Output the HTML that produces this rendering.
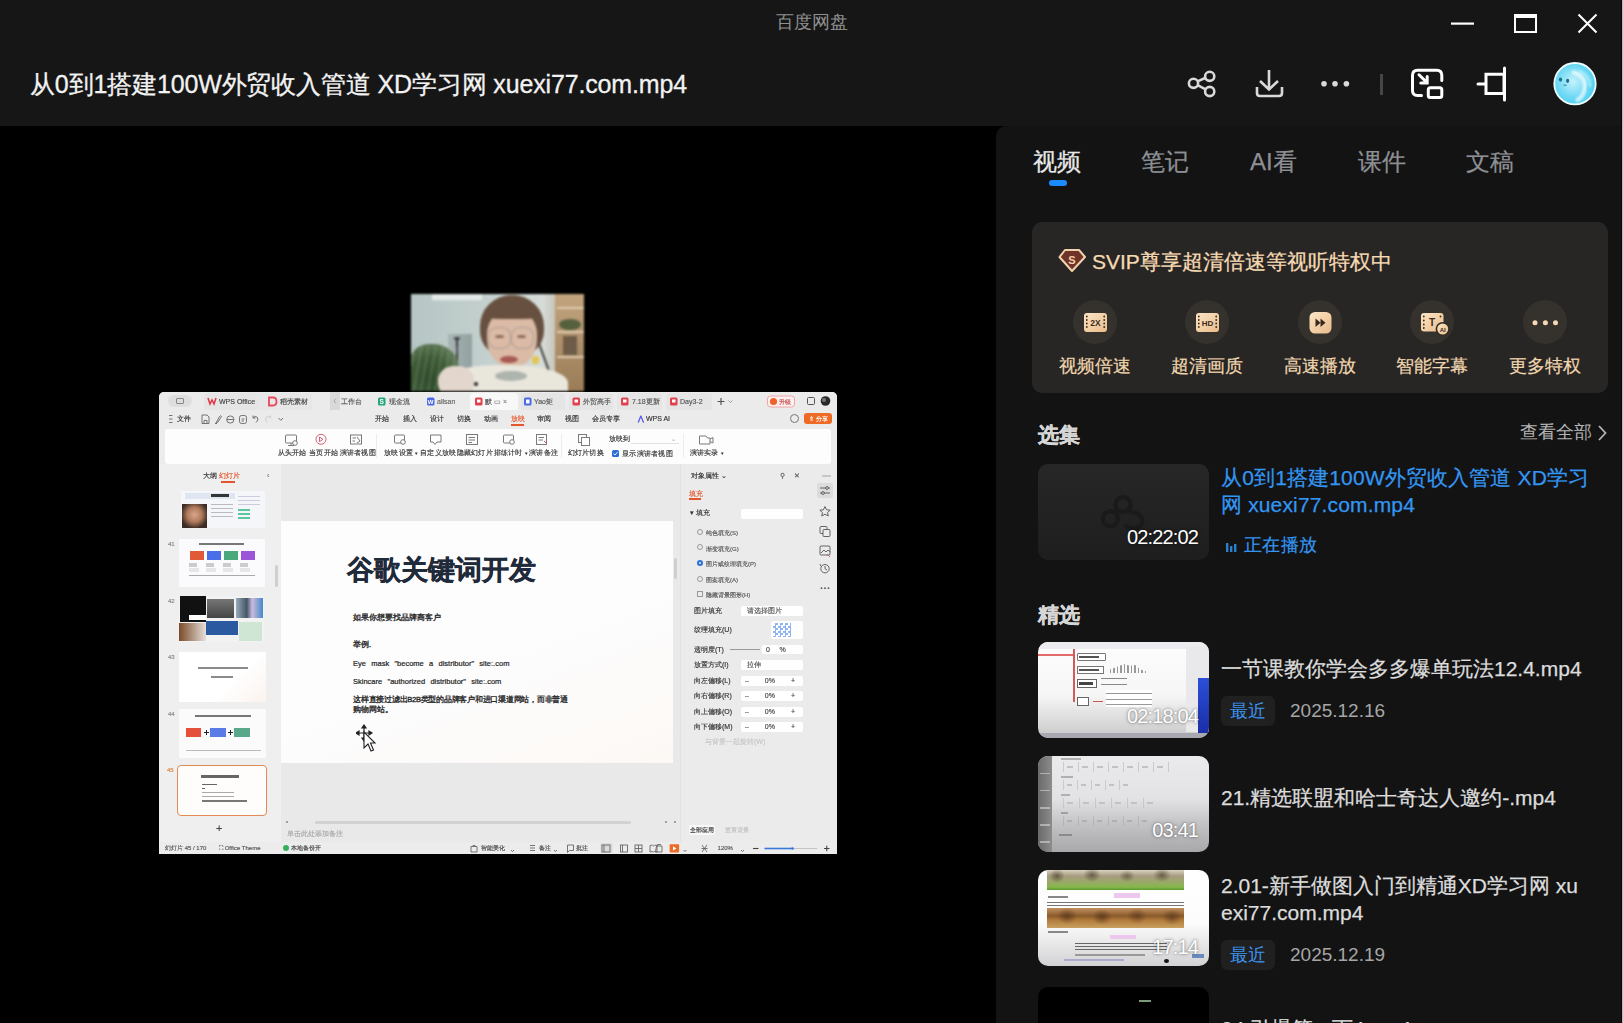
<!DOCTYPE html>
<html><head><meta charset="utf-8">
<style>
*{box-sizing:border-box;margin:0;padding:0}
html,body{width:1623px;height:1023px;overflow:hidden;background:#000;font-family:"Liberation Sans",sans-serif}
.a{position:absolute}
.nw{white-space:nowrap}
.rl{top:57px;font-size:6px;letter-spacing:0.3px}
.t{position:absolute;font-style:normal;font-size:7px;line-height:8px;color:#333;white-space:nowrap;-webkit-text-stroke:0.15px currentColor}
#tb{left:0;top:0;width:1623px;height:126px;background:#161616}
#panel{left:996px;top:126px;width:627px;height:897px;background:#131313;border-top-left-radius:10px}
.tab{top:145px;font-size:24px;color:#8d8f94;line-height:34px;-webkit-text-stroke:0.25px currentColor}
.feat{width:44px;height:44px;border-radius:50%;background:#35312c;top:300px}
.flab{top:354px;font-size:18px;color:#f0d6ae;line-height:24px;width:100px;text-align:center;-webkit-text-stroke:0.2px currentColor}
.thumb{left:1038px;width:171px;height:96px;border-radius:10px;overflow:hidden}
.dur{color:#fff;font-size:20px;line-height:20px;letter-spacing:-0.85px;text-align:right;text-shadow:0 0 2px rgba(0,0,0,.45),0 0 4px rgba(0,0,0,.25)}
.ititle{left:1221px;font-size:21px;color:#dcdcdc;line-height:27px;width:380px;-webkit-text-stroke:0.25px currentColor}
.badge{left:1221px;width:54px;height:30px;border-radius:6px;background:#202020;color:#3b94f0;font-size:18px;line-height:30px;text-align:center}
.date{left:1290px;font-size:19px;color:#a6a6a6;line-height:30px}
</style></head><body>
<div id="tb" class="a"></div>
<div class="a nw" style="left:0;width:1623px;top:10px;text-align:center;font-size:18px;color:#8f8f8f;line-height:24px">百度网盘</div>
<div class="a nw" style="left:30px;top:67px;font-size:25px;color:#f2f2f2;line-height:34px;letter-spacing:-0.15px;-webkit-text-stroke:0.3px #f2f2f2">从0到1搭建100W外贸收入管道 XD学习网 xuexi77.com.mp4</div>

<!-- window controls -->
<svg class="a" style="left:1440px;top:0" width="183" height="50">
 <rect x="11" y="22.5" width="23" height="2.2" fill="#fff"/>
 <rect x="75" y="15" width="21" height="17" fill="none" stroke="#fff" stroke-width="2"/>
 <rect x="74" y="14" width="23" height="4" fill="#fff"/>
 <path d="M138.5 14.5 L156.5 32.5 M156.5 14.5 L138.5 32.5" stroke="#fff" stroke-width="2"/>
</svg>

<!-- toolbar icons -->
<svg class="a" style="left:1170px;top:55px" width="453" height="60">
 <g fill="none" stroke="#d9d9d9" stroke-width="2.6">
  <circle cx="23.5" cy="28.3" r="4.6"/>
  <circle cx="39.7" cy="21.3" r="4.6"/>
  <circle cx="39.7" cy="36.5" r="4.6"/>
  <path d="M27.6 26.4 L35.6 22.8 M27.6 30.2 L35.6 34.4"/>
  <path d="M99 15 V34 M90 26 L99 34.5 L108 26"/>
  <path d="M87 32 V38 Q87 41 90 41 H109 Q112 41 112 38 V32"/>
 </g>
 <g fill="#d9d9d9"><circle cx="154" cy="28.8" r="2.8"/><circle cx="165" cy="28.8" r="2.8"/><circle cx="176.4" cy="28.8" r="2.8"/></g>
 <rect x="210" y="19" width="3" height="21" fill="#464646"/>
 <g fill="none" stroke="#fff" stroke-width="3" stroke-linecap="round">
  <path d="M251.5 40.4 H247.5 Q242.5 40.4 242.5 35.4 V20.2 Q242.5 15.2 247.5 15.2 H266.8 Q271.8 15.2 271.8 20.2 V25.5"/>
  <rect x="258.3" y="32.8" width="13.5" height="9.7" rx="2"/>
  <path d="M249 19.8 L257 27.6 M257.2 21.5 V28 H250.8"/>
  <path d="M316 19.3 H334 V38.5 H316 Z"/>
  <path d="M334.5 13 V45 M308 29 H315"/>
 </g>
</svg>
<!-- avatar -->
<svg class="a" style="left:1552px;top:61px" width="46" height="46">
 <defs><radialGradient id="av" cx="0.45" cy="0.45" r="0.6"><stop offset="0" stop-color="#c4f2fc"/><stop offset="0.65" stop-color="#6cd8f4"/><stop offset="1" stop-color="#48d0f2"/></radialGradient></defs>
 <filter id="avb"><feGaussianBlur stdDeviation="1.2"/></filter><circle cx="23" cy="22.7" r="20.7" fill="url(#av)" stroke="#f0fdff" stroke-width="1.8"/>
 <path d="M20 11 Q33 14 33 26 Q32 36 24 40" fill="none" stroke="rgba(255,255,255,.7)" stroke-width="4" filter="url(#avb)"/>
 <path d="M27 10 Q38 14 38 26" fill="none" stroke="rgba(200,250,255,.6)" stroke-width="2.5" filter="url(#avb)"/>
 <ellipse cx="8.5" cy="18.6" rx="1.6" ry="2.1" fill="#1d6f88"/>
 <ellipse cx="15.6" cy="19.8" rx="1.6" ry="2.1" fill="#1d6f88"/>
 <path d="M11.5 24.2 H14.5" stroke="#1d6f88" stroke-width="0.9"/>
</svg>

<!-- right panel -->
<div id="panel" class="a"></div>
<div class="a nw tab" style="left:1033px;color:#e8e8e8">视频</div>
<div class="a nw tab" style="left:1141px">笔记</div>
<div class="a nw tab" style="left:1250px">AI看</div>
<div class="a nw tab" style="left:1358px">课件</div>
<div class="a nw tab" style="left:1466px">文稿</div>
<div class="a" style="left:1049px;top:180px;width:18px;height:6px;border-radius:3px;background:#1a8cff"></div>

<!-- svip card -->
<div class="a" style="left:1032px;top:222px;width:576px;height:171px;border-radius:10px;background:#272625"></div>
<svg class="a" style="left:1058px;top:248px" width="30" height="26">
 <path d="M7 2 H21 L27 9 L14 23 L1.5 9 Z" fill="#6e3427" stroke="#f3d1ae" stroke-width="2" stroke-linejoin="round"/>
 <text x="14" y="15.5" font-size="11" fill="#f3d1ae" text-anchor="middle" font-family="Liberation Sans" font-weight="bold">S</text>
</svg>
<div class="a nw" style="left:1092px;top:248px;font-size:21px;color:#f6dab2;line-height:28px;-webkit-text-stroke:0.25px #f6dab2">SVIP尊享超清倍速等视听特权中</div>

<div class="a feat" style="left:1073px"></div>
<div class="a feat" style="left:1185px"></div>
<div class="a feat" style="left:1298px"></div>
<div class="a feat" style="left:1410px"></div>
<div class="a feat" style="left:1523px"></div>

<svg class="a" style="left:1073px;top:300px" width="500" height="46">
 <defs><linearGradient id="pg" x1="0" y1="0" x2="1" y2="1"><stop offset="0" stop-color="#fde6c6"/><stop offset="1" stop-color="#e9bb8a"/></linearGradient></defs>
 <!-- 2X -->
 <rect x="11" y="13" width="23" height="19" rx="3" fill="url(#pg)"/>
 <g fill="#3a2a1e"><circle cx="13.8" cy="16.5" r="0.9"/><circle cx="13.8" cy="20" r="0.9"/><circle cx="13.8" cy="23.5" r="0.9"/><circle cx="13.8" cy="27" r="0.9"/>
 <circle cx="31.2" cy="16.5" r="0.9"/><circle cx="31.2" cy="20" r="0.9"/><circle cx="31.2" cy="23.5" r="0.9"/><circle cx="31.2" cy="27" r="0.9"/></g>
 <text x="22.5" y="25.5" font-size="8.5" font-weight="bold" fill="#3a2a1e" text-anchor="middle" font-family="Liberation Sans">2X</text>
 <!-- HD -->
 <rect x="123" y="13" width="23" height="19" rx="3" fill="url(#pg)"/>
 <g fill="#3a2a1e"><circle cx="125.8" cy="16.5" r="0.9"/><circle cx="125.8" cy="20" r="0.9"/><circle cx="125.8" cy="23.5" r="0.9"/><circle cx="125.8" cy="27" r="0.9"/>
 <circle cx="143.2" cy="16.5" r="0.9"/><circle cx="143.2" cy="20" r="0.9"/><circle cx="143.2" cy="23.5" r="0.9"/><circle cx="143.2" cy="27" r="0.9"/></g>
 <text x="134.5" y="25.5" font-size="8" font-weight="bold" fill="#3a2a1e" text-anchor="middle" font-family="Liberation Sans">HD</text>
 <!-- fast -->
 <rect x="236.5" y="12" width="22" height="21.5" rx="5.5" fill="url(#pg)"/>
 <path d="M242.5 18.5 L247.5 22.7 L242.5 27 Z M247.5 18.5 L252.5 22.7 L247.5 27 Z" fill="#3a2a1e"/>
 <!-- subtitle -->
 <rect x="348" y="13" width="22.5" height="18.5" rx="3" fill="url(#pg)"/>
 <g fill="#3a2a1e"><circle cx="350.8" cy="16.5" r="0.9"/><circle cx="350.8" cy="20.5" r="0.9"/><circle cx="350.8" cy="24.5" r="0.9"/><circle cx="350.8" cy="28" r="0.9"/><circle cx="367.5" cy="16.5" r="0.9"/></g>
 <text x="359" y="26" font-size="10" font-weight="bold" fill="#3a2a1e" text-anchor="middle" font-family="Liberation Sans">T</text>
 <circle cx="369.7" cy="29" r="6.3" fill="url(#pg)" stroke="#302b27" stroke-width="1.6"/>
 <text x="369.7" y="31.5" font-size="6" font-weight="bold" fill="#3a2a1e" text-anchor="middle" font-family="Liberation Sans">AI</text>
 <!-- more -->
 <g fill="#f6d9b4"><circle cx="462" cy="22.7" r="2.5"/><circle cx="472.4" cy="22.7" r="2.5"/><circle cx="482.5" cy="22.7" r="2.5"/></g>
</svg>
<div class="a nw flab" style="left:1045px">视频倍速</div>
<div class="a nw flab" style="left:1157px">超清画质</div>
<div class="a nw flab" style="left:1270px">高速播放</div>
<div class="a nw flab" style="left:1382px">智能字幕</div>
<div class="a nw flab" style="left:1495px">更多特权</div>

<!-- section 选集 -->
<div class="a nw" style="left:1038px;top:421px;font-size:21px;font-weight:bold;color:#d6d6d6;line-height:28px;-webkit-text-stroke:0.3px #d6d6d6">选集</div>
<div class="a nw" style="left:1520px;top:419px;font-size:18px;color:#b4b4b4;line-height:26px">查看全部</div>
<svg class="a" style="left:1596px;top:424px" width="12" height="18"><path d="M3 2 L9.5 9 L3 16" fill="none" stroke="#b4b4b4" stroke-width="1.8"/></svg>

<div class="a thumb" style="top:464px;background:linear-gradient(#272727,#1e1e1e)"></div>
<svg class="a" style="left:1095px;top:485px" width="60" height="50"><g fill="none" stroke="#1a1a1a" stroke-width="4.2"><circle cx="28" cy="19.5" r="7.5"/><circle cx="15.5" cy="33.6" r="7.5"/><path d="M34 27 Q44 27 47 33 Q49 40 42 43 Q36 45 30 40"/></g></svg>
<svg class="a" style="left:1225px;top:540px" width="14" height="13"><g fill="#2a7fd0"><rect x="1" y="3" width="2.4" height="9"/><rect x="5" y="6" width="2.4" height="6"/><rect x="9" y="4" width="2.4" height="8"/></g></svg>
<div class="a dur nw" style="left:1110px;top:527px;width:88px">02:22:02</div>
<div class="a nw" style="left:1221px;top:464px;font-size:21px;color:#3396f2;line-height:27px;width:384px;white-space:normal;letter-spacing:0.15px;-webkit-text-stroke:0.25px #3396f2">从0到1搭建100W外贸收入管道 XD学习网 xuexi77.com.mp4</div>
<div class="a nw" style="left:1244px;top:532px;font-size:18px;color:#3396f2;line-height:26px;letter-spacing:0.3px;-webkit-text-stroke:0.2px #3396f2">正在播放</div>

<!-- section 精选 -->
<div class="a nw" style="left:1038px;top:601px;font-size:21px;font-weight:bold;color:#d6d6d6;line-height:28px;-webkit-text-stroke:0.3px #d6d6d6">精选</div>

<div class="a thumb" style="top:642px;background:linear-gradient(#fdfdfd 0%,#f6f6f6 55%,#c9c9c9 100%)">
 <div class="a" style="left:0;top:0;width:171px;height:7px;background:#ececf0"></div>
 <div class="a" style="left:0;top:12px;width:35px;height:1.5px;background:#e26a6a"></div>
 <div class="a" style="left:35px;top:7px;width:1.5px;height:53px;background:#d45a5a"></div>
 <div class="a" style="left:39px;top:11px;width:29px;height:8px;border:1px solid #777;border-radius:1px;background:#fff"></div>
 <div class="a" style="left:41px;top:14px;width:20px;height:2px;background:#555"></div>
 <div class="a" style="left:39px;top:24px;width:27px;height:8px;border:1px solid #777;background:#fff"></div>
 <div class="a" style="left:41px;top:27px;width:20px;height:2px;background:#555"></div>
 <div class="a" style="left:72px;top:22px;width:36px;height:9px;background:repeating-linear-gradient(90deg,#999 0 1.5px,transparent 1.5px 3.5px);clip-path:polygon(0 60%,20% 30%,40% 0,55% 20%,70% 10%,85% 60%,100% 80%,100% 100%,0 100%)"></div>
 <div class="a" style="left:39px;top:37px;width:20px;height:9px;border:1px solid #666;background:#fff"></div>
 <div class="a" style="left:41px;top:40px;width:14px;height:2.5px;background:#444"></div>
 <div class="a" style="left:63px;top:36px;width:26px;height:1px;background:#888"></div>
 <div class="a" style="left:63px;top:42px;width:26px;height:1px;background:#888"></div>
 <div class="a" style="left:39px;top:55px;width:12px;height:9px;border:1px solid #666;background:#fff"></div>
 <div class="a" style="left:55px;top:59px;width:10px;height:1px;background:#c55"></div>
 <div class="a" style="left:68px;top:48px;width:46px;height:17px;background:repeating-linear-gradient(#fff 0 3px,#999 3px 4px,#fff 4px 5.5px)"></div>
 <div class="a" style="left:148px;top:4px;width:23px;height:86px;background:#e9e9ec"></div>
 <div class="a" style="left:160px;top:36px;width:11px;height:55px;background:linear-gradient(#2a4fd8,#1b2fa8)"></div>
 <div class="a" style="left:0;top:91px;width:171px;height:5px;background:#a8a8b0"></div>
</div>
<div class="a dur nw" style="left:1110px;top:706px;width:88px">02:18:04</div>
<div class="a ititle nw" style="top:655px">一节课教你学会多多爆单玩法12.4.mp4</div>
<div class="a badge" style="top:696px">最近</div>
<div class="a date nw" style="top:696px">2025.12.16</div>

<div class="a thumb" style="top:756px;background:linear-gradient(#ebebed 0%,#e2e2e4 45%,#c4c4c6 70%,#a8a8aa 100%)">
 <div class="a" style="left:0;top:0;width:14px;height:96px;background:linear-gradient(90deg,#6a6a6a,#8c8c8c)"></div>
 <div class="a" style="left:2px;top:12px;width:10px;height:80px;background:repeating-linear-gradient(transparent 0 5px,rgba(230,230,230,.5) 5px 6.5px,transparent 6.5px 17px)"></div>
 <div class="a" style="left:25px;top:6px;width:108px;height:10px;background:repeating-linear-gradient(90deg,rgba(190,190,195,.7) 0 0.7px,transparent 0.7px 15px)"></div>
 <div class="a" style="left:29px;top:10px;width:100px;height:2px;background:repeating-linear-gradient(90deg,#c2c2c2 0 6px,transparent 6px 15px)"></div>
 <div class="a" style="left:25px;top:24px;width:70px;height:10px;background:repeating-linear-gradient(90deg,rgba(190,190,195,.7) 0 0.7px,transparent 0.7px 14px)"></div>
 <div class="a" style="left:29px;top:28px;width:64px;height:2px;background:repeating-linear-gradient(90deg,#c2c2c2 0 5px,transparent 5px 14px)"></div>
 <div class="a" style="left:25px;top:42px;width:96px;height:10px;background:repeating-linear-gradient(90deg,rgba(190,190,195,.7) 0 0.7px,transparent 0.7px 16px)"></div>
 <div class="a" style="left:29px;top:46px;width:88px;height:2px;background:repeating-linear-gradient(90deg,#c2c2c2 0 6px,transparent 6px 16px)"></div>
 <div class="a" style="left:25px;top:60px;width:90px;height:10px;background:repeating-linear-gradient(90deg,rgba(170,170,175,.6) 0 0.7px,transparent 0.7px 15px)"></div>
 <div class="a" style="left:29px;top:64px;width:84px;height:2px;background:repeating-linear-gradient(90deg,#b0b0b0 0 5px,transparent 5px 15px)"></div>
 <div class="a" style="left:23px;top:2px;width:20px;height:1.5px;background:#b0b0b0"></div>
 <div class="a" style="left:23px;top:20px;width:12px;height:1.5px;background:#b0b0b0"></div>
 <div class="a" style="left:23px;top:38px;width:9px;height:1.5px;background:#b0b0b0"></div>
 <div class="a" style="left:23px;top:56px;width:7px;height:1.5px;background:#a0a0a0"></div>
 <div class="a" style="left:21px;top:78px;width:13px;height:2px;background:#8a8a8a"></div>
</div>
<div class="a dur nw" style="left:1110px;top:820px;width:88px">03:41</div>
<div class="a ititle nw" style="top:784px">21.精选联盟和哈士奇达人邀约-.mp4</div>

<div class="a thumb" style="top:870px;background:linear-gradient(#fff 0%,#fcfcfc 55%,#d2d2d4 100%)">
 <div class="a" style="left:9px;top:0;width:137px;height:20px;background:linear-gradient(#d8d2c0 0%,#a89c80 30%,#9aa868 60%,#86b84a 85%,#5a9a30 100%)"></div>
 <div class="a" style="left:9px;top:0;width:137px;height:14px;background:radial-gradient(ellipse 8px 7px at 10px 6px,rgba(60,50,30,.6),transparent),radial-gradient(ellipse 9px 7px at 45px 5px,rgba(60,50,30,.6),transparent),radial-gradient(ellipse 8px 6px at 80px 6px,rgba(60,50,30,.5),transparent),radial-gradient(ellipse 9px 7px at 115px 5px,rgba(60,50,30,.6),transparent)"></div>
 <div class="a" style="left:76px;top:23px;width:26px;height:5px;background:#ecc8ee"></div>
 <div class="a" style="left:10px;top:26px;width:20px;height:1.5px;background:#888"></div>
 <div class="a" style="left:9px;top:32px;width:137px;height:4px;background:repeating-linear-gradient(#777 0 1.2px,transparent 1.2px 3px)"></div>
 <div class="a" style="left:9px;top:38px;width:137px;height:20px;background:linear-gradient(#c09060 0%,#8a5a2a 40%,#b07a3a 60%,#c8a060 100%)"></div>
 <div class="a" style="left:9px;top:38px;width:137px;height:20px;background:radial-gradient(ellipse 10px 8px at 20px 8px,rgba(70,40,20,.6),transparent),radial-gradient(ellipse 10px 8px at 55px 9px,rgba(70,40,20,.6),transparent),radial-gradient(ellipse 10px 8px at 90px 8px,rgba(70,40,20,.5),transparent),radial-gradient(ellipse 10px 8px at 125px 9px,rgba(70,40,20,.55),transparent)"></div>
 <div class="a" style="left:10px;top:61px;width:20px;height:1.5px;background:#888"></div>
 <div class="a" style="left:72px;top:65px;width:26px;height:4px;background:#ecc8ee"></div>
 <div class="a" style="left:37px;top:73px;width:92px;height:8px;background:repeating-linear-gradient(#666 0 1.3px,transparent 1.3px 2.8px)"></div>
 <div class="a" style="left:37px;top:84px;width:70px;height:1.5px;background:#999"></div>
 <div class="a" style="left:26px;top:89px;width:60px;height:1.5px;background:#aac"></div>
 <div class="a" style="left:126px;top:89px;width:5px;height:4px;border-radius:50%;background:#111"></div>
 <div class="a" style="left:154px;top:84px;width:12px;height:4px;background:#6a8ac0"></div>
</div>
<div class="a dur nw" style="left:1110px;top:937px;width:88px">17:14</div>
<div class="a ititle nw" style="top:872px">2.01-新手做图入门到精通XD学习网 xu<br>exi77.com.mp4</div>
<div class="a badge" style="top:940px">最近</div>
<div class="a date nw" style="top:940px">2025.12.19</div>

<div class="a thumb" style="top:987px;background:#000"><div class="a" style="left:101px;top:13px;width:12px;height:2px;background:#7a9a7a"></div></div>
<div class="a ititle nw" style="top:1015px">04.引爆篇 - 下4.mp4</div>

<!-- collapse chevron -->
<svg class="a" style="left:975px;top:522px" width="18" height="22"><path d="M5 4 L12 11 L5 18" fill="none" stroke="#4a4a4a" stroke-width="2.2"/></svg>

<!-- VIDEO -->
<div class="a" style="left:0;top:126px;width:996px;height:897px;background:#000"></div>
<div id="vid" style="filter:blur(0.55px)">
<!-- webcam -->
<div class="a" style="left:411px;top:294px;width:173px;height:97px;overflow:hidden;filter:blur(1.2px);background:linear-gradient(90deg,#b6c6c4 0%,#c2cfcd 40%,#cdd6d3 62%,#d6dcd8 76%,#c8c6bc 83%,#b49872 86%,#a88a66 100%)">
  <div class="a" style="left:21px;top:0;width:50px;height:7px;background:#e2e9e7;border-bottom:1px solid #c9d2d0"></div>
  <div class="a" style="left:37px;top:40px;width:24px;height:38px;background:linear-gradient(90deg,#a9b5b5,#92a0a0)"></div>
  <div class="a" style="left:45px;top:44px;width:2px;height:30px;background:#3a3f3f"></div>
  <div class="a" style="left:43px;top:43px;width:6px;height:3px;border-radius:50%;background:#3a3f3f"></div>
  <div class="a" style="left:-2px;top:50px;width:50px;height:50px;border-radius:40% 50% 0 0;background:radial-gradient(ellipse at 40% 70%,#2f4a2c 0%,#3f5c38 45%,#65805c 80%,rgba(120,140,110,.6) 100%)"></div>
  <div class="a" style="left:0;top:52px;width:46px;height:45px;background:repeating-linear-gradient(100deg,transparent 0 3px,rgba(170,190,160,.35) 3px 4px,transparent 4px 7px)"></div>
  <div class="a" style="left:144px;top:0;width:29px;height:97px;background:linear-gradient(#c2a47e,#9a7c58)"></div>
  <div class="a" style="left:146px;top:13px;width:27px;height:2px;background:#e0ceb0"></div>
  <div class="a" style="left:146px;top:37px;width:27px;height:2px;background:#e0ceb0"></div>
  <div class="a" style="left:146px;top:62px;width:27px;height:2px;background:#e0ceb0"></div>
  <div class="a" style="left:148px;top:25px;width:22px;height:11px;border-radius:50%;background:#56603e"></div>
  <div class="a" style="left:152px;top:42px;width:14px;height:19px;background:#6e5c48"></div>
  <div class="a" style="left:133px;top:45px;width:2px;height:42px;background:#3a3a32;transform:rotate(-20deg)"></div>
  <div class="a" style="left:69px;top:1px;width:64px;height:62px;border-radius:50% 50% 42% 42%;background:#675040"></div>
  <div class="a" style="left:76px;top:16px;width:50px;height:58px;border-radius:42% 42% 50% 50%;background:#dbbaa6"></div>
  <div class="a" style="left:73px;top:10px;width:56px;height:15px;border-radius:50% 50% 30% 30%;background:#675040"></div>
  <div class="a" style="left:77px;top:33px;width:23px;height:22px;border-radius:40%;border:1.3px solid #ada098"></div>
  <div class="a" style="left:100px;top:33px;width:23px;height:22px;border-radius:40%;border:1.3px solid #ada098"></div>
  <div class="a" style="left:84px;top:41px;width:9px;height:3px;border-radius:50%;background:#8a6a5a"></div>
  <div class="a" style="left:106px;top:41px;width:9px;height:3px;border-radius:50%;background:#8a6a5a"></div>
  <div class="a" style="left:89px;top:62px;width:18px;height:7px;border-radius:50%;background:#a85a55"></div>
  <div class="a" style="left:29px;top:71px;width:128px;height:40px;border-radius:45% 45% 0 0;background:#e9e6dc"></div>
  <div class="a" style="left:84px;top:77px;width:32px;height:10px;border-radius:50%;background:#aeb4ae"></div>
  <div class="a" style="left:27px;top:72px;width:36px;height:32px;border-radius:45%;background:#e3d6cc"></div>
  <div class="a" style="left:121px;top:62px;width:7px;height:8px;border-radius:40%;background:#e2c650"></div>
  <div class="a" style="left:63px;top:88px;width:4px;height:4px;border-radius:50%;background:#222"></div>
</div>

<!-- WPS window -->
<div class="a" style="left:159px;top:392px;width:678px;height:462px;background:#ececec;border-radius:5px 5px 0 0;overflow:hidden">
 <!-- tab bar -->
 <div class="a" style="left:0;top:0;width:678px;height:37px;background:#ebebeb"></div>
 <div class="a" style="left:9px;top:3px;width:24px;height:12px;border-radius:6px;background:#dedede"></div>
 <div class="a" style="left:17px;top:6px;width:8px;height:6px;border:1px solid #888;border-radius:1px"></div>
 <div class="a" style="left:45px;top:1px;width:54px;height:17px;background:#e5e5e5;border-radius:4px 4px 0 0"></div>
 <div class="a" style="left:98px;top:1px;width:55px;height:17px;background:#e7e7e7;border-radius:4px 4px 0 0"></div>
 <div class="a" style="left:171px;top:0;width:10px;height:18px;background:#d9d9d9"></div>
 <div class="a" style="left:311px;top:1px;width:48px;height:17px;background:#f8f8f8;border-radius:4px 4px 0 0"></div>
 <div class="a" style="left:362px;top:1px;width:44px;height:17px;background:#e5e5e5;border-radius:4px 4px 0 0"></div>
 <div class="a" style="left:410px;top:1px;width:44px;height:17px;background:#e5e5e5;border-radius:4px 4px 0 0"></div>
 <div class="a" style="left:458px;top:1px;width:45px;height:17px;background:#e5e5e5;border-radius:4px 4px 0 0"></div>
 <div class="a" style="left:507px;top:1px;width:46px;height:17px;background:#e5e5e5;border-radius:4px 4px 0 0"></div>
 <svg class="a" style="left:0;top:0" width="678" height="18">
  <path d="M49 6 L51 12 L53 8 L55 12 L57 6" fill="none" stroke="#e23a4a" stroke-width="1.6"/>
  <path d="M110 5.5 H114 Q117.5 5.5 117.5 9.5 Q117.5 13.5 114 13.5 H110 Z" fill="none" stroke="#e8485a" stroke-width="1.8"/>
  <path d="M177 6.5 L175 9 L177 11.5" fill="none" stroke="#999" stroke-width="0.8"/>
  <rect x="219" y="5.5" width="7.5" height="8" rx="1.5" fill="#23a478"/><text x="222.7" y="12" font-size="6.5" font-weight="bold" fill="#fff" text-anchor="middle" font-family="Liberation Sans">S</text>
  <rect x="268" y="5.5" width="7.5" height="8" rx="1.5" fill="#4a68e6"/><text x="271.7" y="12" font-size="6" font-weight="bold" fill="#fff" text-anchor="middle" font-family="Liberation Sans">W</text>
  <rect x="316" y="5.5" width="7.5" height="8" rx="1.5" fill="#e2404f"/>
  <rect x="365" y="5.5" width="7.5" height="8" rx="1.5" fill="#4a68e6"/>
  <rect x="413.5" y="5.5" width="7.5" height="8" rx="1.5" fill="#e2404f"/>
  <rect x="462" y="5.5" width="7.5" height="8" rx="1.5" fill="#e2404f"/>
  <rect x="511" y="5.5" width="7.5" height="8" rx="1.5" fill="#e2404f"/>
  <g fill="#fff"><rect x="318" y="7.5" width="3.5" height="3"/><rect x="415.5" y="7.5" width="3.5" height="3"/><rect x="464" y="7.5" width="3.5" height="3"/><rect x="513" y="7.5" width="3.5" height="3"/><rect x="367" y="7.5" width="3.5" height="4"/></g>
  <path d="M558.5 9.5 H565.5 M562 6 V13" stroke="#555" stroke-width="1.2"/>
  <path d="M569.5 8.5 L571.5 10.5 L573.5 8.5" fill="none" stroke="#888" stroke-width="0.8"/>
  <rect x="608.5" y="4" width="27" height="11" rx="3" fill="#fdf0f0" stroke="#f0a6a6" stroke-width="1"/>
  <circle cx="614.5" cy="9.5" r="3.6" fill="#f0622a"/>
  <rect x="648.5" y="5.5" width="7" height="7" rx="1" fill="none" stroke="#555" stroke-width="1"/>
  <circle cx="666.5" cy="9" r="4.8" fill="#2a2a2a"/><circle cx="665" cy="8" r="2" fill="#777"/>
 </svg>
 <i class="t" style="left:60px;top:5.5px;color:#444">WPS Office</i>
 <i class="t" style="left:121px;top:5.5px;color:#444">稻壳素材</i>
 <i class="t" style="left:182px;top:5.5px;color:#555">工作台</i>
 <i class="t" style="left:230px;top:5.5px;color:#555">现金流</i>
 <i class="t" style="left:278px;top:5.5px;color:#666">allsan</i>
 <i class="t" style="left:326px;top:5.5px;color:#444">默 <span style="color:#888">▭ ×</span></i>
 <i class="t" style="left:375px;top:5.5px;color:#555">Yao矩</i>
 <i class="t" style="left:424px;top:5.5px;color:#555">外贸高手</i>
 <i class="t" style="left:473px;top:5.5px;color:#555">7.18更新</i>
 <i class="t" style="left:521px;top:5.5px;color:#555">Day3-2</i>
 <i class="t" style="left:620px;top:6px;color:#c04040;font-size:6px">升级</i>

 <!-- menu row -->
 <svg class="a" style="left:0;top:18px" width="140" height="18"><g fill="none" stroke="#666" stroke-width="0.9">
  <path d="M10 5.5 H13.5 M10 9 H13.5 M10 12.5 H13.5"/>
  <path d="M43 5 H48 L50 7 V13.5 H43 Z M45 13.5 V10.5 H48 V13.5"/>
  <path d="M57 13 L60.5 6.5 Q62 5 62.5 6.5 L59 12 Z M56 13.5 H58"/>
  <circle cx="71.3" cy="9.5" r="3.6"/><path d="M68 9.5 H74.5"/>
  <rect x="80.5" y="5.5" width="7" height="8" rx="2"/><path d="M82.5 9 H85.5 M82.5 11 H85"/>
  <path d="M94 8 Q96 5 98.5 7.5 Q100 10 97 12.5 M94 8 V5.5 M94 8 H96.5"/>
  <path d="M111.5 8 Q109.5 5 107 7.5 Q105.5 10 108.5 12.5 M111.5 8 V5.5" stroke="#c8c8c8"/>
  <path d="M119.5 8 L121.8 10.3 L124 8"/>
 </g></svg>
 <i class="t" style="left:17.8px;top:23px">文件</i>
 <i class="t" style="left:216px;top:23px">开始</i>
 <i class="t" style="left:244px;top:23px">插入</i>
 <i class="t" style="left:271px;top:23px">设计</i>
 <i class="t" style="left:298px;top:23px">切换</i>
 <i class="t" style="left:325px;top:23px">动画</i>
 <i class="t" style="left:352px;top:23px;color:#e4572e">放映</i>
 <div class="a" style="left:352px;top:32px;width:13px;height:1.5px;background:#e4572e"></div>
 <i class="t" style="left:378px;top:23px">审阅</i>
 <i class="t" style="left:406px;top:23px">视图</i>
 <i class="t" style="left:433px;top:23px">会员专享</i>
 <i class="t" style="left:479px;top:23px"><b style="color:#5b5ef0">⋀</b> WPS AI</i>
 <div class="a" style="left:631px;top:22px;width:9px;height:9px;border-radius:50%;border:1px solid #777"></div>
 <div class="a" style="left:645px;top:21px;width:28px;height:11px;border-radius:3px;background:#ef6a24"></div>
 <i class="t" style="left:650px;top:23px;color:#fff;font-size:6px">⇧ 分享</i>

 <!-- ribbon -->
 <div class="a" style="left:6px;top:37px;width:666px;height:35px;background:#fdfdfd;border-radius:3px"></div>
 <svg class="a" style="left:0;top:37px" width="678" height="35"><g fill="none" stroke="#7a7a7a" stroke-width="1">
  <rect x="126.5" y="6" width="11" height="8" rx="1"/><path d="M132 14 V16 M129 16.5 H135"/><circle cx="136" cy="14" r="2.3" fill="#fff"/>
  <circle cx="162" cy="10.3" r="5" stroke="#d06070"/><path d="M160.5 8 L164 10.3 L160.5 12.6 Z" stroke="#d06070"/>
  <rect x="191.5" y="6" width="11" height="9"/><path d="M193.5 9 H197 M193.5 12 H196 M198 8 L201 12 L198 14"/>
  <rect x="235.5" y="6" width="10" height="8" rx="1"/><circle cx="244" cy="13" r="2.3" fill="#fff"/>
  <path d="M271.5 6 H282 V13 H278 L276 15.5 L274 13 H271.5 Z"/>
  <rect x="307.5" y="5.5" width="11" height="10"/><path d="M309.5 8.5 H316 M309.5 11 H316 M309.5 13.5 H313"/>
  <rect x="344.5" y="6" width="10" height="8" rx="1"/><circle cx="353" cy="13" r="2.3" fill="#fff"/>
  <rect x="377.5" y="5.5" width="10" height="10"/><path d="M379.5 8.5 H385 M379.5 11 H384" /><path d="M385 12 L388 15" stroke="#d06070"/>
  <rect x="419.5" y="5.5" width="8" height="8"/><rect x="422.5" y="8.5" width="8" height="8" fill="#fff"/>
  <path d="M540.5 7 H547 L548.5 9 H551 V15 H540.5 Z"/><path d="M551 10 L554 8.5 V14 L551 12.5"/>
 </g></svg>
 <div class="a" style="left:217px;top:42px;width:1px;height:24px;background:#ececec"></div>
 <div class="a" style="left:402px;top:42px;width:1px;height:24px;background:#ececec"></div>
 <div class="a" style="left:524px;top:42px;width:1px;height:24px;background:#ececec"></div>
 <i class="t rl" style="left:118.5px">从头开始</i>
 <i class="t rl" style="left:150px">当页开始</i>
 <i class="t rl" style="left:180.6px">演讲者视图</i>
 <i class="t rl" style="left:225px">放映设置 <span style="font-size:5px">▾</span></i>
 <i class="t rl" style="left:261px">自定义放映</i>
 <i class="t rl" style="left:297.6px">隐藏幻灯片</i>
 <i class="t rl" style="left:334.6px">排练计时 <span style="font-size:5px">▾</span></i>
 <i class="t rl" style="left:370px">演讲备注</i>
 <i class="t rl" style="left:408.6px">幻灯片切换</i>
 <i class="t" style="left:450px;top:43px;font-size:6.5px">放映到</i>
 <div class="a" style="left:472px;top:41px;width:48px;height:11px;border-bottom:1px solid #e2e2e2"></div>
 <i class="t" style="left:512px;top:43px;font-size:6px;color:#aaa">⌄</i>
 <div class="a" style="left:453px;top:58px;width:7px;height:7px;background:#2b6fd6;border-radius:1.5px"></div>
 <svg class="a" style="left:453px;top:58px" width="7" height="7"><path d="M1.5 3.6 L3 5 L5.6 2" fill="none" stroke="#fff" stroke-width="0.9"/></svg>
 <i class="t rl" style="left:463px;top:57.5px">显示演讲者视图</i>
 <i class="t rl" style="left:530.5px">演讲实录 <span style="font-size:5px">▾</span></i>
 <!-- sidebar -->
 <div class="a" style="left:0;top:72px;width:122px;height:378px;background:#efefef"></div>
 <i class="t" style="left:44px;top:80px">大纲</i>
 <i class="t" style="left:60px;top:80px;color:#e4572e">幻灯片</i>
 <div class="a" style="left:62px;top:89px;width:14px;height:1.5px;background:#e4572e"></div>
 <i class="t" style="left:108px;top:80px;color:#777">‹</i>
 <div class="a" style="left:116px;top:173px;width:2.5px;height:22px;border-radius:2px;background:#cfcfcf"></div>
 <!-- thumb 40 -->
 <div class="a" style="left:22px;top:99px;width:84px;height:37px;background:#f4f6f9"></div>
 <div class="a" style="left:23px;top:112px;width:25px;height:24px;background:radial-gradient(circle at 50% 45%,#d9a58a 0%,#b07a5e 40%,#3d2c24 75%)"></div>
 <div class="a" style="left:26px;top:101px;width:50px;height:6px;background:#dfe6f2"></div>
 <div class="a" style="left:52px;top:102px;width:18px;height:3px;background:#333"></div>
 <div class="a" style="left:52px;top:112px;width:22px;height:14px;background:repeating-linear-gradient(#bbb 0 1px,#f4f6f9 1px 4px)"></div>
 <div class="a" style="left:79px;top:104px;width:22px;height:10px;background:repeating-linear-gradient(#ccd 0 1px,#f4f6f9 1px 4px)"></div>
 <div class="a" style="left:79px;top:117px;width:12px;height:10px;background:repeating-linear-gradient(#5cc6a0 0 2px,#f4f6f9 2px 4px)"></div>
 <!-- thumb 41 -->
 <i class="t" style="left:9px;top:148px;color:#888;font-size:6px">41</i>
 <div class="a" style="left:20px;top:147px;width:86px;height:48px;background:#fbfbfd"></div>
 <div class="a" style="left:40px;top:151px;width:45px;height:2px;background:#777"></div>
 <div class="a" style="left:31px;top:159px;width:14px;height:9px;background:#e05a3a"></div>
 <div class="a" style="left:48px;top:159px;width:14px;height:9px;background:#4a6ee8"></div>
 <div class="a" style="left:65px;top:159px;width:14px;height:9px;background:#4aa87a"></div>
 <div class="a" style="left:82px;top:159px;width:14px;height:9px;background:#9a55d8"></div>
 <div class="a" style="left:30px;top:171px;width:66px;height:4px;background:repeating-linear-gradient(90deg,#ccc 0 8px,#fbfbfd 8px 17px)"></div>
 <div class="a" style="left:30px;top:176px;width:66px;height:4px;background:repeating-linear-gradient(90deg,#e6e6e6 0 10px,#fbfbfd 10px 17px)"></div>
 <div class="a" style="left:30px;top:183px;width:66px;height:1px;background:#aaa"></div>
 <!-- thumb 42 -->
 <i class="t" style="left:9px;top:205px;color:#888;font-size:6px">42</i>
 <div class="a" style="left:20px;top:204px;width:85px;height:46px;background:#f2f2f2"></div>
 <div class="a" style="left:21px;top:204px;width:26px;height:26px;background:#111"></div>
 <div class="a" style="left:30px;top:223px;width:17px;height:5px;background:#fff"></div>
 <div class="a" style="left:48px;top:207px;width:27px;height:19px;background:linear-gradient(#777,#444)"></div>
 <div class="a" style="left:77px;top:206px;width:27px;height:20px;background:linear-gradient(90deg,#9ab 0%,#456 40%,#cbd 60%,#48c 100%)"></div>
 <div class="a" style="left:20px;top:231px;width:27px;height:18px;background:linear-gradient(90deg,#7a4a2a,#e6e0da)"></div>
 <div class="a" style="left:47px;top:229px;width:32px;height:14px;background:#2c5aa0"></div>
 <div class="a" style="left:80px;top:230px;width:23px;height:19px;background:#cfe6d4"></div>
 <!-- thumb 43 -->
 <i class="t" style="left:9px;top:261px;color:#888;font-size:6px">43</i>
 <div class="a" style="left:20px;top:260px;width:87px;height:50px;background:linear-gradient(135deg,#fff 60%,#fbf3ee)"></div>
 <div class="a" style="left:39px;top:275px;width:50px;height:2px;background:#8a8a8a"></div>
 <div class="a" style="left:52px;top:284px;width:22px;height:2px;background:#8a8a8a"></div>
 <!-- thumb 44 -->
 <i class="t" style="left:9px;top:318px;color:#888;font-size:6px">44</i>
 <div class="a" style="left:20px;top:317px;width:87px;height:49px;background:#fcfbfb"></div>
 <div class="a" style="left:36px;top:323px;width:56px;height:2px;background:#777"></div>
 <div class="a" style="left:27px;top:336px;width:15px;height:9px;background:#e5503a"></div>
 <div class="a" style="left:45px;top:338px;width:5px;height:5px;background:#222;clip-path:polygon(40% 0,60% 0,60% 40%,100% 40%,100% 60%,60% 60%,60% 100%,40% 100%,40% 60%,0 60%,0 40%,40% 40%)"></div>
 <div class="a" style="left:51px;top:336px;width:16px;height:9px;background:#5a7ae6"></div>
 <div class="a" style="left:69px;top:338px;width:5px;height:5px;background:#222;clip-path:polygon(40% 0,60% 0,60% 40%,100% 40%,100% 60%,60% 60%,60% 100%,40% 100%,40% 60%,0 60%,0 40%,40% 40%)"></div>
 <div class="a" style="left:75px;top:336px;width:16px;height:9px;background:#5aa88a"></div>
 <div class="a" style="left:27px;top:358px;width:75px;height:1px;background:#bbb"></div>
 <!-- thumb 45 -->
 <i class="t" style="left:8px;top:374px;color:#e4863e;font-size:6px">45</i>
 <div class="a" style="left:18px;top:373px;width:90px;height:51px;background:#fffdfb;border:1.5px solid #e48a55;border-radius:4px"></div>
 <div class="a" style="left:42px;top:383px;width:38px;height:2.5px;background:#666"></div>
 <div class="a" style="left:43px;top:392px;width:15px;height:1px;background:#666"></div>
 <div class="a" style="left:43px;top:396px;width:3px;height:1px;background:#666"></div>
 <div class="a" style="left:43px;top:400px;width:32px;height:1px;background:#aaa"></div>
 <div class="a" style="left:43px;top:404px;width:32px;height:1px;background:#aaa"></div>
 <div class="a" style="left:43px;top:408px;width:45px;height:1.5px;background:#777"></div>
 <i class="t" style="left:57px;top:430px;font-size:11px;color:#444;line-height:12px">+</i>

 <!-- canvas -->
 <div class="a" style="left:122px;top:72px;width:399px;height:378px;background:#e9e9e9"></div>
 <div class="a" style="left:122px;top:129px;width:392px;height:242px;background:linear-gradient(160deg,#fdfdfe 55%,#fcf8f4 100%)"></div>
 <div class="a nw" style="left:188px;top:163px;font-size:27px;line-height:30px;font-weight:bold;color:#1f2a3a;-webkit-text-stroke:0.4px #1f2a3a">谷歌关键词开发</div>
 <i class="t" style="left:194px;top:222px;font-size:7.5px;color:#2a2a2a;-webkit-text-stroke:0.35px #2a2a2a">如果你想要找品牌商客户</i>
 <i class="t" style="left:194px;top:249px;font-size:7.5px;color:#2a2a2a;-webkit-text-stroke:0.35px #2a2a2a">举例.</i>
 <i class="t" style="left:194px;top:268px;font-size:7.5px;color:#222;word-spacing:3.2px;-webkit-text-stroke:0.2px #222">Eye mask "become a distributor" site:.com</i>
 <i class="t" style="left:194px;top:286px;font-size:7.5px;color:#222;word-spacing:3.2px;-webkit-text-stroke:0.2px #222">Skincare "authorized distributor" site:.com</i>
 <i class="t" style="left:194px;top:304px;letter-spacing:-0.25px;font-size:7.5px;color:#2a2a2a;-webkit-text-stroke:0.35px #2a2a2a">这样直接过滤出B2B类型的品牌客户和进口渠道网站，而非普通</i>
 <i class="t" style="left:194px;top:314px;font-size:7.5px;color:#2a2a2a;-webkit-text-stroke:0.35px #2a2a2a">购物网站。</i>
 <svg class="a" style="left:197px;top:332px" width="22" height="30"><g stroke="#222" stroke-width="1.2" fill="#222"><path d="M2 9 H14 M8 3 V15" fill="none"/><path d="M8 1 L6 4 H10Z M8 17 L6 14 H10Z M0 9 L3 7 V11Z M16 9 L13 7 V11Z"/></g><path d="M8 8 L8 24 L12 20 L15 27 L17.5 26 L14.5 19 L19 19 Z" fill="#fff" stroke="#222" stroke-width="1.1"/></svg>
 <div class="a" style="left:515px;top:166px;width:3px;height:21px;border-radius:2px;background:#cfcfcf"></div>
 <div class="a" style="left:156px;top:429px;width:316px;height:2.5px;border-radius:2px;background:#d2d2d2"></div>
 <div class="a" style="left:127px;top:428.5px;width:2px;height:2px;border-radius:50%;background:#888"></div>
 <div class="a" style="left:506px;top:428.5px;width:2px;height:2px;border-radius:50%;background:#888"></div>
 <div class="a" style="left:515px;top:428.5px;width:2px;height:2px;border-radius:50%;background:#888"></div>
 <i class="t" style="left:128px;top:438px;color:#aaa">单击此处添加备注</i>

 <!-- property panel -->
 <div class="a" style="left:521px;top:72px;width:135px;height:378px;background:#ebebeb;border-left:1px solid #e2e2e2"></div>
 <i class="t" style="left:532px;top:80px;color:#333">对象属性 ⌄</i>
 <i class="t" style="left:621px;top:80px;color:#555">⚲</i>
 <i class="t" style="left:635px;top:80px;color:#555">✕</i>
 <i class="t" style="left:530px;top:98px;color:#e4572e">填充</i>
 <div class="a" style="left:530px;top:106px;width:12px;height:1.5px;background:#e4572e"></div>
 <i class="t" style="left:531px;top:117px;color:#333">▾ 填充</i>
 <div class="a" style="left:582px;top:117px;width:62px;height:10px;background:#fff;border-radius:2px"></div>
 <div class="a" style="left:538px;top:137px;width:6px;height:6px;border:1px solid #999;border-radius:50%"></div>
 <i class="t" style="left:547px;top:137px;color:#555;font-size:6px">纯色填充(S)</i>
 <div class="a" style="left:538px;top:152px;width:6px;height:6px;border:1px solid #999;border-radius:50%"></div>
 <i class="t" style="left:547px;top:153px;color:#555;font-size:6px">渐变填充(G)</i>
 <div class="a" style="left:538px;top:168px;width:6px;height:6px;border:2px solid #2b6fd6;border-radius:50%"></div>
 <i class="t" style="left:547px;top:168px;color:#555;font-size:6px">图片或纹理填充(P)</i>
 <div class="a" style="left:538px;top:184px;width:6px;height:6px;border:1px solid #999;border-radius:50%"></div>
 <i class="t" style="left:547px;top:184px;color:#555;font-size:6px">图案填充(A)</i>
 <div class="a" style="left:538px;top:199px;width:6px;height:6px;border:1px solid #999"></div>
 <i class="t" style="left:547px;top:199px;color:#555;font-size:6px">隐藏背景图形(H)</i>
 <i class="t" style="left:535px;top:215px;color:#333">图片填充</i>
 <div class="a" style="left:582px;top:214px;width:62px;height:10px;background:#fff;border-radius:2px"></div>
 <i class="t" style="left:588px;top:215px;color:#555">请选择图片</i>
 <i class="t" style="left:535px;top:234px;color:#333">纹理填充(U)</i>
 <div class="a" style="left:612px;top:229px;width:32px;height:18px;background:#fff;border-radius:2px"></div>
 <div class="a" style="left:614px;top:231px;width:18px;height:14px;background:repeating-conic-gradient(#8fb4ee 0 25%,#fff 0 50%) 0 0/5px 5px"></div>
 <i class="t" style="left:535px;top:254px;color:#333">透明度(T)</i>
 <div class="a" style="left:571px;top:257px;width:30px;height:1px;background:#999"></div>
 <div class="a" style="left:603px;top:253px;width:41px;height:9px;background:#fff;border-radius:2px"></div>
 <i class="t" style="left:607px;top:254px;color:#444">0 &nbsp; &nbsp; %</i>
 <i class="t" style="left:535px;top:269px;color:#333">放置方式(I)</i>
 <div class="a" style="left:582px;top:268px;width:62px;height:10px;background:#fff;border-radius:2px"></div>
 <i class="t" style="left:588px;top:269px;color:#555">拉伸</i>
 <i class="t" style="left:535px;top:285px;color:#333">向左偏移(L)</i>
 <div class="a" style="left:582px;top:284px;width:62px;height:10px;background:#fff;border-radius:2px"></div>
 <i class="t" style="left:586px;top:285px;color:#444;word-spacing:14px">– 0% +</i>
 <i class="t" style="left:535px;top:300px;color:#333">向右偏移(R)</i>
 <div class="a" style="left:582px;top:299px;width:62px;height:10px;background:#fff;border-radius:2px"></div>
 <i class="t" style="left:586px;top:300px;color:#444;word-spacing:14px">– 0% +</i>
 <i class="t" style="left:535px;top:316px;color:#333">向上偏移(O)</i>
 <div class="a" style="left:582px;top:315px;width:62px;height:10px;background:#fff;border-radius:2px"></div>
 <i class="t" style="left:586px;top:316px;color:#444;word-spacing:14px">– 0% +</i>
 <i class="t" style="left:535px;top:331px;color:#333">向下偏移(M)</i>
 <div class="a" style="left:582px;top:330px;width:62px;height:10px;background:#fff;border-radius:2px"></div>
 <i class="t" style="left:586px;top:331px;color:#444;word-spacing:14px">– 0% +</i>
 <i class="t" style="left:546px;top:346px;color:#c8c8c8">与背景一起旋转(W)</i>
 <div class="a" style="left:530px;top:433px;width:26px;height:10px;background:#f8f8f8;border-radius:2px"></div>
 <i class="t" style="left:531px;top:434px;color:#333;font-size:6px">全部应用</i>
 <i class="t" style="left:566px;top:434px;color:#c4c4c4;font-size:6px">重置背景</i>
 <!-- right icon column -->
 <div class="a" style="left:656px;top:72px;width:22px;height:378px;background:#ebebeb"></div>
 <svg class="a" style="left:656px;top:72px" width="22" height="140">
  <path d="M7 12 H16" stroke="#999" stroke-width="0.9"/>
  <rect x="2" y="19" width="16" height="15" rx="2" fill="#dcdcdc"/>
  <g fill="none" stroke="#555" stroke-width="0.9">
   <path d="M5 24 H15 M5 29 H15"/><circle cx="12" cy="24" r="1.4" fill="#dcdcdc"/><circle cx="8" cy="29" r="1.4" fill="#dcdcdc"/>
   <path d="M10 42.5 L11.6 45.8 L15.2 46.2 L12.5 48.6 L13.3 52 L10 50.2 L6.7 52 L7.5 48.6 L4.8 46.2 L8.4 45.8 Z"/>
   <rect x="5" y="62.5" width="7" height="7" rx="1"/><rect x="8" y="65.5" width="7" height="7" rx="1" fill="#ebebeb"/>
   <rect x="5" y="82" width="10" height="9" rx="1"/><path d="M6 89 L9 86 L11 88 L13 86 L15 88"/><path d="M12 90 L15 93" stroke="#c55"/>
   <circle cx="10" cy="104.7" r="4.2"/><path d="M10 102 V104.7 L12 106"/><path d="M5.8 102 L5 100" />
  </g>
  <g fill="#555"><circle cx="6.5" cy="124.2" r="0.9"/><circle cx="10" cy="124.2" r="0.9"/><circle cx="13.5" cy="124.2" r="0.9"/></g>
 </svg>

 <!-- status bar -->
 <div class="a" style="left:0;top:450px;width:678px;height:12px;background:#ececec"></div>
 <i class="t" style="left:6px;top:452px;color:#555;font-size:6px">幻灯片 45 / 170</i>
 <i class="t" style="left:60px;top:452px;color:#555;font-size:6px">⛶ Office Theme</i>
 <div class="a" style="left:124px;top:453px;width:6px;height:6px;border-radius:50%;background:#34b05a"></div>
 <i class="t" style="left:132px;top:452px;color:#444;font-size:6px">本地备份开</i>
 <svg class="a" style="left:300px;top:450px" width="378" height="12"><g fill="none" stroke="#666" stroke-width="0.9">
  <path d="M12 4.5 H18 V10 H12 Z M13 4.5 Q15 2 17 4.5"/>
  <path d="M52 8 L53.5 9.5 L55 8 M95 8 L96.5 9.5 L98 8 M224.5 8 L226 9.5 L227.5 8 M282 8 L283.5 9.5 L285 8"/>
  <path d="M71 3.5 H76 M71 6 H76 M71 8.5 H76"/>
  <path d="M108.5 3 H114.5 V8.5 H110.5 L108.5 10.5 Z"/>
  <rect x="161.5" y="3" width="7" height="7"/><path d="M163.5 3 V10"/>
  <rect x="176" y="3" width="7" height="7"/><path d="M176 6.5 H183 M179.5 3 V10"/>
  <path d="M191 3.5 Q194 2.5 194.5 4 Q195 2.5 198 3.5 V10 Q195 9 194.5 10 Q194 9 191 10 Z"/>
  <path d="M197.5 4 H203 V10 H196.5 Z M198.5 4 V2.5 H202"/>
  <path d="M243 3 L248 10 M248 3 L243 10 M242.5 6.5 H248.5"/>
 </g>
 <rect x="141.5" y="1" width="12" height="10" rx="1" fill="#dadada"/><rect x="143" y="3" width="8" height="7" fill="none" stroke="#666" stroke-width="0.9"/><path d="M145 3 V10" stroke="#666" stroke-width="0.9"/>
 <rect x="210.6" y="2.3" width="9.5" height="8.2" rx="1" fill="#ef6a24"/><path d="M214 4.3 L217.5 6.4 L214 8.5 Z" fill="#fff"/>
 <path d="M294 6.5 H299.5" stroke="#444" stroke-width="1.1"/>
 <rect x="305.5" y="6" width="52.5" height="1" fill="#c4c4c4"/><rect x="305.5" y="5.7" width="28" height="1.6" fill="#3a78d8"/><circle cx="333.6" cy="6.5" r="1.3" fill="#3a78d8"/>
 <path d="M365 6.5 H370.5 M367.75 3.8 V9.2" stroke="#444" stroke-width="1.1"/>
 </svg>
 <i class="t" style="left:322px;top:452px;color:#444;font-size:6px">智能美化</i>
 <i class="t" style="left:379.5px;top:452px;color:#444;font-size:6px">备注</i>
 <i class="t" style="left:417.4px;top:452px;color:#444;font-size:6px">批注</i>
 <i class="t" style="left:558.6px;top:452px;color:#555;font-size:6px">120%</i>
</div>
</div>

<div class="a" style="left:1621px;top:0;width:1px;height:1023px;background:#080808"></div>
<div class="a" style="left:1622px;top:0;width:1px;height:1023px;background:#bdbdbd"></div>
</body></html>
